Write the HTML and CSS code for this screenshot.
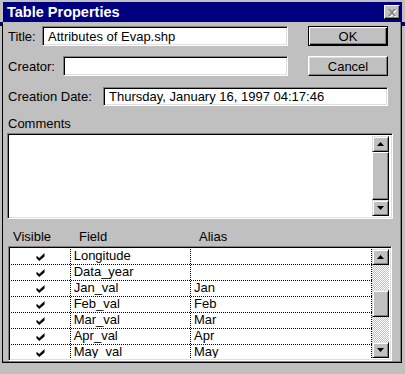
FILE: index.html
```html
<!DOCTYPE html>
<html lang="en">
<head>
    <meta charset="UTF-8">
    <title>Table Properties</title>
    <link rel="stylesheet" href="styles.css">
</head>
<body>
<div class="dialog">
    <div class="titlebar">
        <span class="caption">Table Properties</span>
        <span class="close">
            <svg width="8" height="7" viewBox="0 0 8 7"><path d="M0 0h2l2 2 2-2h2L5 3.5 8 7H6L4 5 2 7H0l3-3.5z" fill="#808080"/></svg>
        </span>
    </div>

    <div class="panel">
        <!-- Title / Creator / Date -->
        <div class="row">
            <label class="lbl lbl-title">Title:</label>
            <div class="field f-title">Attributes of Evap.shp</div>
            <button class="btn btn-default">OK</button>
        </div>
        <div class="row row-gap">
            <label class="lbl lbl-creator">Creator:</label>
            <div class="field f-creator"></div>
            <button class="btn">Cancel</button>
        </div>
        <div class="row row-gap">
            <label class="lbl lbl-date">Creation Date:</label>
            <div class="field f-date">Thursday, January 16, 1997 04:17:46</div>
        </div>

        <div class="comments-label">Comments</div>
        <div class="field comments">
            <div class="comments-text"></div>
            <div class="vscroll vscroll-full">
                <div class="arrow"><svg width="7" height="4" viewBox="0 0 7 4"><path d="M3.5 0L7 4H0z"/></svg></div>
                <div class="thumb thumb-full"></div>
                <div class="arrow"><svg width="7" height="4" viewBox="0 0 7 4"><path d="M0 0h7L3.5 4z"/></svg></div>
            </div>
        </div>

        <!-- Field list -->
        <div class="grid-head">
            <span class="h-visible">Visible</span>
            <span class="h-field">Field</span>
            <span>Alias</span>
        </div>
        <div class="field grid">
            <div class="rows" id="rows"></div>
            <div class="vscroll">
                <div class="arrow"><svg width="7" height="4" viewBox="0 0 7 4"><path d="M3.5 0L7 4H0z"/></svg></div>
                <div class="track track-top"></div>
                <div class="thumb"></div>
                <div class="track track-bottom"></div>
                <div class="arrow"><svg width="7" height="4" viewBox="0 0 7 4"><path d="M0 0h7L3.5 4z"/></svg></div>
            </div>
        </div>
    </div>
</div>

<script>
    var fields = [
        ['Longitude', ''],
        ['Data_year', ''],
        ['Jan_val', 'Jan'],
        ['Feb_val', 'Feb'],
        ['Mar_val', 'Mar'],
        ['Apr_val', 'Apr'],
        ['May_val', 'May']
    ];
    var check = '<svg width="9" height="8" viewBox="0 0 7 7"><path d="M0 2.3L2.4 4.4 7 0v3L2.4 7 0 4.6z"/></svg>';
    var html = '';
    fields.forEach(function (f) {
        html += '<div class="grow">' +
            '<div class="cell c-vis">' + check + '</div>' +
            '<div class="cell c-field">' + f[0] + '</div>' +
            '<div class="cell c-alias">' + f[1] + '</div>' +
            '</div>';
    });
    document.getElementById('rows').innerHTML = html;
</script>
</body>
</html>
```

FILE: styles.css
```css
/* Win95 style dialog */
* {
    box-sizing: border-box;
}

body {
    margin: 0;
    width: 405px;
    height: 374px;
    overflow: hidden;
    font-family: "Liberation Sans", Arial, sans-serif;
    font-size: 13px;
    color: #000;
    /* strip of the window behind */
    background: linear-gradient(#c0c0c0 22px, #000080 22px, #000080 26px, #c0c0c0 26px);
}

.dialog {
    margin: 2px 3px 0 2px;
}

/* Title bar */
.titlebar {
    height: 20px;
    margin-left: 1px;
    background: #000080;
    color: #fff;
    display: flex;
    align-items: center;
    justify-content: space-between;
    padding: 0 2px 0 4px;
}

.caption {
    font-weight: bold;
    font-size: 14.5px;
}

.close {
    width: 16px;
    height: 14px;
    background: #c0c0c0;
    border: 1px solid;
    border-color: #fff #000 #000 #fff;
    box-shadow: inset -1px -1px #808080;
    display: flex;
    align-items: center;
    justify-content: center;
}

.close svg {
    filter: drop-shadow(1px 1px 0 #fff);
}

/* Main panel */
.panel {
    background: #c0c0c0;
    border: 1px solid #000;
    border-top: none;
    box-shadow: inset -1px -1px #808080;
    padding: 4px 0 3px 5px;
    height: 341px;
}

.row {
    display: flex;
    align-items: center;
    height: 20px;
}

.row-gap {
    margin-top: 10px;
}

.lbl {
    flex: none;
}

.lbl-title { width: 34px; }
.lbl-creator { width: 55px; }
.lbl-date { width: 95px; }

/* sunken white box */
.field {
    background: #fff;
    border: 1px solid;
    border-color: #808080 #fff #fff #808080;
    box-shadow: inset 1px 1px #000, inset -1px -1px #dfdfdf;
}

.row .field {
    height: 20px;
    padding-left: 5px;
    display: flex;
    align-items: center;
    white-space: nowrap;
}

.f-title { width: 246px; }
.f-creator { width: 225px; }
.f-date { width: 285px; height: 19px !important; }

.btn {
    width: 80px;
    height: 20px;
    margin-left: 20px;
    padding: 0;
    font-family: inherit;
    font-size: 13px;
    color: #000;
    background: #c0c0c0;
    border: 1px solid;
    border-color: #fff #000 #000 #fff;
    box-shadow: inset -1px -1px #808080, inset 1px 1px #dfdfdf;
}

.btn-default {
    border-color: #000;
    box-shadow: inset 1px 1px #fff, inset -1px -1px #000, inset -2px -2px #808080;
}

/* Comments */
.comments-label {
    margin-top: 10px;
    height: 17px;
    line-height: 16px;
}

.comments {
    margin-left: -1px;
    width: 386px;
    height: 86px;
    display: flex;
    padding: 2px;
}

.comments-text {
    flex: 1;
}

.vscroll {
    width: 17px;
    display: flex;
    flex-direction: column;
}

.vscroll-full {
    margin-right: 1px;
    height: 80px;
}

.arrow,
.thumb {
    background: #c0c0c0;
    border: 1px solid;
    border-color: #dfdfdf #000 #000 #dfdfdf;
    box-shadow: inset 1px 1px #fff, inset -1px -1px #808080;
}

.arrow {
    height: 16px;
    display: flex;
    align-items: center;
    justify-content: center;
}

.thumb {
    height: 27px;
}

.thumb-full {
    flex: 1;
    border-color: #fff #000 #000 #fff;
    box-shadow: inset -1px -1px #808080;
}

.track {
    height: 26px;
    background: repeating-conic-gradient(#fff 0 25%, #c0c0c0 0 50%) 0 0 / 2px 2px;
}

/* Field grid */
.grid-head {
    margin-top: 10px;
    height: 17px;
    line-height: 16px;
    display: flex;
    padding-left: 5px;
}

.h-visible { width: 66px; }
.h-field { width: 120px; }

.grid {
    width: 384px;
    height: 115px;
    padding: 2px;
    display: flex;
}

.rows {
    flex: 1;
    overflow: hidden;
}

.grow {
    display: flex;
    height: 16px;
    border-bottom: 1px dotted #000;
}

.cell {
    height: 15px;
    line-height: 14px;
    padding-left: 3px;
    border-right: 1px dotted #000;
    white-space: nowrap;
}

.c-vis {
    width: 60px;
    padding: 0;
    display: flex;
    align-items: center;
    justify-content: center;
}

.c-field { width: 121px; }
.c-alias { width: 182px; }
```
